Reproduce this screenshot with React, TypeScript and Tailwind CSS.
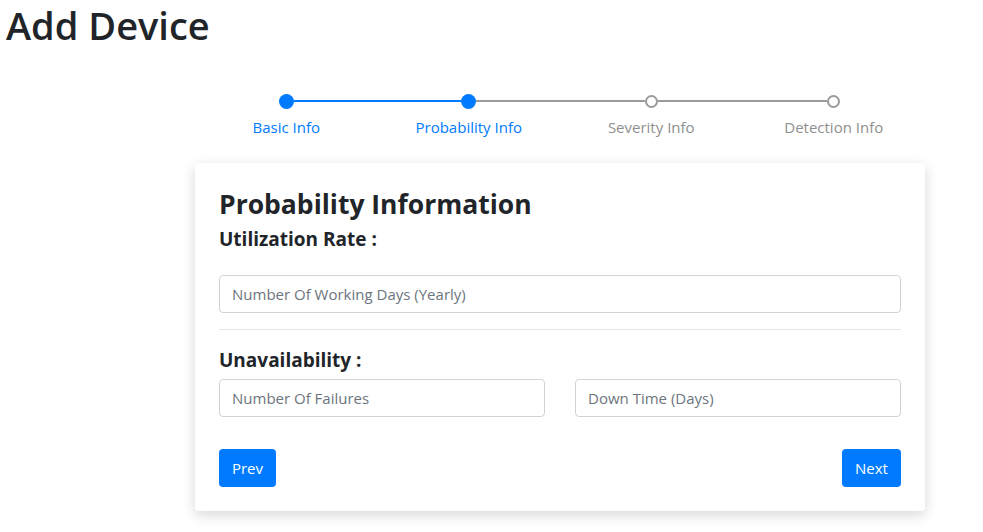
import React from "react";

const steps = ["Basic Info", "Probability Info", "Severity Info", "Detection Info"];
const active = 1;

function Step({ label, i }: { label: string; i: number }) {
  const done = i <= active;
  const leftBlue = i <= active;
  const rightBlue = i < active;
  return (
    <div className="flex flex-1 flex-col items-center">
      <div className="flex w-full items-center h-[16px]">
        <div
          className={
            i === 0
              ? "h-[2px] flex-1"
              : leftBlue
              ? "h-[2px] flex-1 bg-[#007bff]"
              : "h-[2px] flex-1 bg-[#9a9a9a]"
          }
        />
        {done ? (
          <div className="h-[15px] w-[15px] rounded-full bg-[#007bff]" />
        ) : (
          <div className="h-[13px] w-[13px] rounded-full border-2 border-[#9a9a9a] bg-white" />
        )}
        <div
          className={
            i === steps.length - 1
              ? "h-[2px] flex-1"
              : rightBlue
              ? "h-[2px] flex-1 bg-[#007bff]"
              : "h-[2px] flex-1 bg-[#9a9a9a]"
          }
        />
      </div>
      <div
        className={
          done
            ? "mt-[8px] text-[15px] leading-[20px] text-[#007bff]"
            : "mt-[8px] text-[15px] leading-[20px] text-[#8f8f8f]"
        }
      >
        {label}
      </div>
    </div>
  );
}

export default function App() {
  return (
    <div
      className="min-h-[532px] bg-white text-[#212529]"
      style={{ fontFamily: '"Open Sans", "Noto Sans", sans-serif' }}
    >
      <h1 className="pl-[6px] text-[38px] font-semibold leading-[50px]">Add Device</h1>
      <div className="ml-[195px] w-[730px]">
        <div className="mt-[43px] flex">
          {steps.map((s, i) => (
            <Step key={s} label={s} i={i} />
          ))}
        </div>
        <div className="mt-[26px] rounded-[4px] bg-white px-[24px] pt-[24px] pb-[24px] shadow-[0_4px_14px_rgba(0,0,0,0.16)]">
          <h3 className="text-[26.5px] font-bold leading-[34px]">Probability Information</h3>
          <h5 className="mt-[6px] text-[19px] font-bold leading-[24px]">Utilization Rate :</h5>
          <input
            className="mt-[24px] block h-[38px] w-full rounded-[4px] border border-[#ced4da] px-[12px] text-[15px] placeholder:text-[#6c757d] outline-none"
            placeholder="Number Of Working Days (Yearly)"
          />
          <hr className="mt-[16px] border-t border-[rgba(0,0,0,0.1)]" />
          <h5 className="mt-[18px] text-[19px] font-bold leading-[24px]">Unavailability :</h5>
          <div className="mt-[7px] grid grid-cols-2 gap-[30px]">
            <input
              className="block h-[38px] w-full rounded-[4px] border border-[#ced4da] px-[12px] text-[15px] placeholder:text-[#6c757d] outline-none"
              placeholder="Number Of Failures"
            />
            <input
              className="block h-[38px] w-full rounded-[4px] border border-[#ced4da] px-[12px] text-[15px] placeholder:text-[#6c757d] outline-none"
              placeholder="Down Time (Days)"
            />
          </div>
          <div className="mt-[32px] flex justify-between">
            <button className="h-[38px] w-[57px] rounded-[4px] bg-[#007bff] text-[15px] text-white">Prev</button>
            <button className="h-[38px] w-[59px] rounded-[4px] bg-[#007bff] text-[15px] text-white">Next</button>
          </div>
        </div>
      </div>
    </div>
  );
}
